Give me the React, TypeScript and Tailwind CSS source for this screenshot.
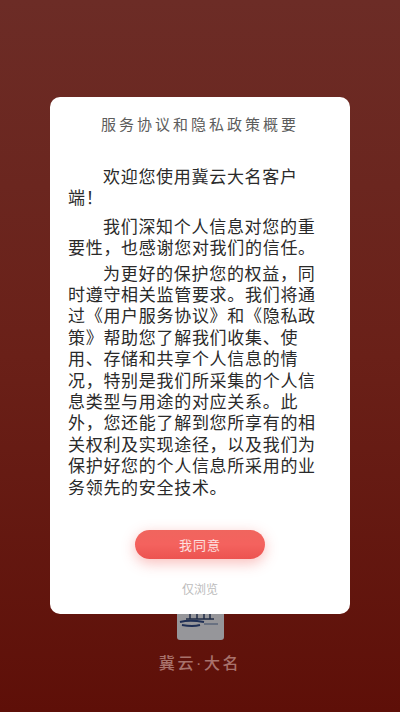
export default function App() {
  const cjk = { fontFamily: '"Noto Sans CJK SC", sans-serif' };
  return (
    <div
      style={cjk}
      className="w-[400px] h-[712px] overflow-hidden flex flex-col items-center pt-[97px] bg-gradient-to-b from-[#6c2c26] via-[#6a2018] to-[#5e0f08]"
    >
      <div className="w-[300px] h-[517px] shrink-0 bg-white rounded-[10px] flex flex-col items-center">
        <h1 className="mt-[16px] text-[15px] leading-[22px] tracking-[3px] font-normal text-[#5c5c5c]">服务协议和隐私政策概要</h1>
        <div className="mt-[30px] self-start ml-[18px] w-[252px] text-[17px] leading-[21.4px] tracking-[0.7px] text-[#2a2a2a]">
          <p className="indent-[35px]">欢迎您使用冀云大名客户端！</p>
          <p className="indent-[35px] mt-[7px]">我们深知个人信息对您的重要性，也感谢您对我们的信任。</p>
          <p className="indent-[35px] mt-[4px]">为更好的保护您的权益，同时遵守相关监管要求。我们将通过《用户服务协议》和《隐私政策》帮助您了解我们收集、使用、存储和共享个人信息的情况，特别是我们所采集的个人信息类型与用途的对应关系。此外，您还能了解到您所享有的相关权利及实现途径，以及我们为保护好您的个人信息所采用的业务领先的安全技术。</p>
        </div>
        <button className="mt-auto w-[130px] h-[29px] rounded-full bg-gradient-to-b from-[#f0655e] via-[#f4625e] to-[#ec5350] shadow-[0_4px_14px_rgba(240,90,85,0.4)] text-white/80 text-[13px] tracking-[1px]">我同意</button>
        <div className="mt-[22px] mb-[17px] text-[12px] leading-[16px] text-[#bcbcbc]">仅浏览</div>
      </div>
      <div className="w-[47px] h-[26px] shrink-0 bg-[#96969a] rounded-b-[3px] overflow-hidden">
        <svg viewBox="0 0 47 26" className="w-[47px] h-[26px]">
          <path d="M9 5h28M13 0v5M20 0v5M27 0v5M33 0v5" stroke="#1f2b46" strokeWidth="1.5" fill="none" />
          <path d="M3 8c8-2 18-1 24 0M5 11c6 1 14 1 18 0" stroke="#1f2f55" strokeWidth="2" fill="none" />
          <path d="M27 10h14" stroke="#5a6478" strokeWidth="1.5" />
        </svg>
      </div>
      <div className="mt-[11px] text-[16px] leading-[22px] tracking-[2.6px] font-medium text-[#a8726c]">
        冀云<span className="font-['Liberation_Sans']">·</span>大名
      </div>
    </div>
  );
}
